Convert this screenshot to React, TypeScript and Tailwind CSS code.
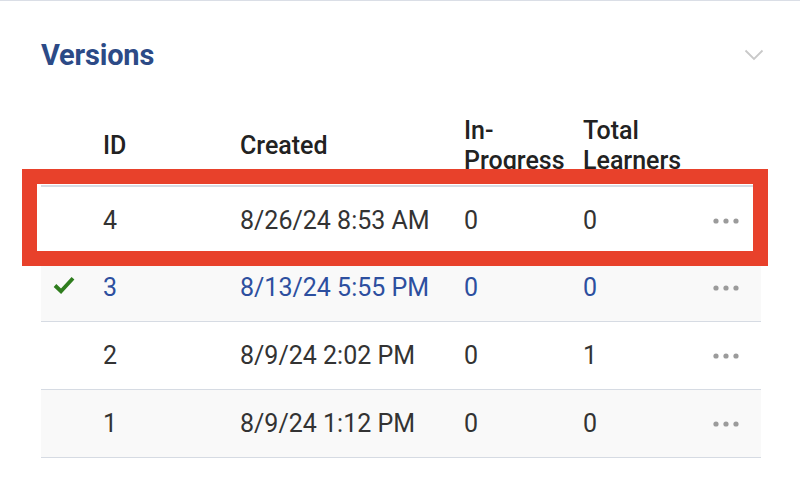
import React from "react";

type Row = { id: string; created: string; inProgress: string; total: string; active?: boolean; shaded?: boolean };

const rows: Row[] = [
  { id: "4", created: "8/26/24 8:53 AM", inProgress: "0", total: "0" },
  { id: "3", created: "8/13/24 5:55 PM", inProgress: "0", total: "0", active: true, shaded: true },
  { id: "2", created: "8/9/24 2:02 PM", inProgress: "0", total: "1" },
  { id: "1", created: "8/9/24 1:12 PM", inProgress: "0", total: "0", shaded: true },
];

const Dots = () => (
  <svg width="26" height="6" viewBox="0 0 26 6" className="block">
    <circle cx="3" cy="3" r="2.6" fill="#9b9b9b" />
    <circle cx="13" cy="3" r="2.6" fill="#9b9b9b" />
    <circle cx="23" cy="3" r="2.6" fill="#9b9b9b" />
  </svg>
);

const Check = () => (
  <svg width="22" height="18" viewBox="0 0 22 18" className="block">
    <path d="M2 9.5 L8 15.2 L20 2.2" fill="none" stroke="#2f7d1e" strokeWidth="3.8" strokeLinecap="butt" strokeLinejoin="miter" />
  </svg>
);

export default function App() {
  const grid = "grid grid-cols-[62px_137px_224px_119px_1fr_72px] items-center";
  return (
    <div
      className="relative w-[800px] h-[500px] bg-white border-t border-[#dadee6] overflow-hidden"
      style={{ fontFamily: "Roboto, 'Liberation Sans', sans-serif" }}
    >
      <div className="flex items-center justify-between pl-[41px] pr-[36px] pt-[37px]">
        <h2 className="text-[29px] leading-[34px] font-bold text-[#2c4a86] tracking-[-0.2px]">Versions</h2>
        <svg width="20" height="12" viewBox="0 0 20 12" className="block">
          <path d="M1.5 1.5 L10 10 L18.5 1.5" fill="none" stroke="#c9c9c9" strokeWidth="1.8" />
        </svg>
      </div>

      <div className="ml-[41px] w-[720px] mt-[33px]">
        <div className={`${grid} pt-[11px] pb-[9px] border-b-2 border-[#d6dbe3] text-[25px] leading-[30px] font-medium text-[#222]`}>
          <div />
          <div>ID</div>
          <div>Created</div>
          <div className="w-[110px]">In-Progress</div>
          <div className="w-[105px]">Total Learners</div>
          <div />
        </div>
        {rows.map((r, i) => (
          <div
            key={r.id}
            className={`${grid} ${i === 0 ? "h-[67px] pt-[2px]" : "h-[68px] pt-[1px]"} border-b border-[#d6dbe3] text-[25px] leading-[30px] ${
              r.shaded ? "bg-[#f9f9f9]" : "bg-white"
            } ${r.active ? "text-[#2d4f9f]" : "text-[#333333]"}`}
          >
            <div className="pl-[12px] -mt-[6px]">{r.active ? <Check /> : null}</div>
            <div>{r.id}</div>
            <div>{r.created}</div>
            <div>{r.inProgress}</div>
            <div>{r.total}</div>
            <div className="flex justify-start pl-[24px]">
              <Dots />
            </div>
          </div>
        ))}
      </div>

      <div className="absolute left-[22px] top-[168px] w-[746px] h-[97px] border-[15px] border-[#e8412b]" />
    </div>
  );
}
